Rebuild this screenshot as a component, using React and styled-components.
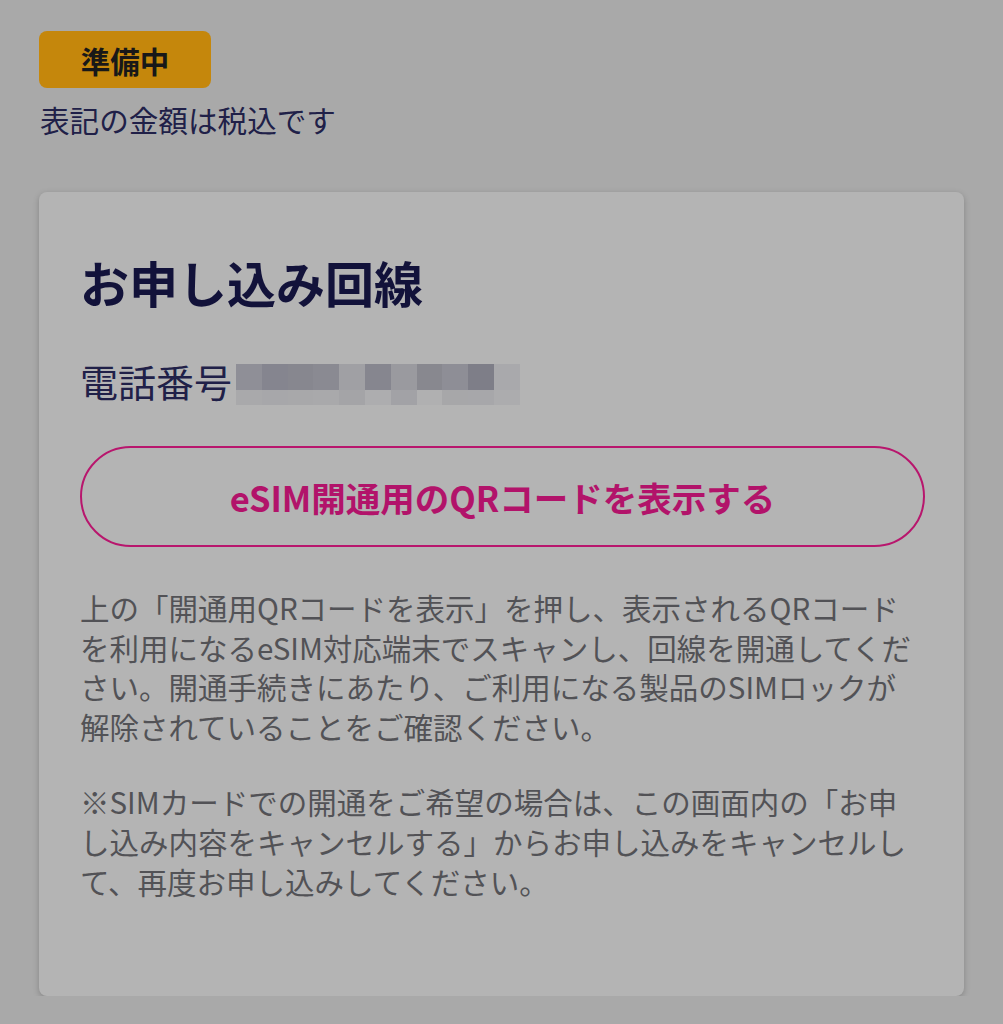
import React from "react";
import styled, { createGlobalStyle } from "styled-components";

const GlobalStyle = createGlobalStyle`
  html, body {
    margin: 0;
    background: #a9a9a9;
  }
  body {
    font-family: "Noto Sans CJK JP", "Noto Sans", sans-serif;
  }
`;

const Page = styled.main`
  padding: 31px 39px 0 39px;
  display: flex;
  flex-direction: column;
  align-items: flex-start;
`;

const Badge = styled.span`
  width: 172px;
  height: 57px;
  border-radius: 8px;
  background: #c5870c;
  color: #181818;
  font-size: 29.5px;
  font-weight: 700;
  display: flex;
  align-items: center;
  justify-content: center;
`;

const TaxNote = styled.p`
  margin: 12px 0 0 1px;
  font-size: 29.6px;
  line-height: 40px;
  color: #202048;
`;

const Card = styled.section`
  align-self: stretch;
  margin-top: 52px;
  background: #b4b4b4;
  border-radius: 8px;
  box-shadow: 0 2px 6px rgba(0, 0, 0, 0.22);
  padding: 56px 39px 95px 41px;
  display: flex;
  flex-direction: column;
`;

const Heading = styled.h2`
  margin: 0;
  font-size: 49px;
  line-height: 68px;
  font-weight: 700;
  color: #12123a;
`;

const PhoneRow = styled.div`
  margin-top: 40px;
  height: 50px;
  display: flex;
  align-items: center;
`;

const PhoneLabel = styled.span`
  font-size: 38px;
  line-height: 50px;
  color: #202048;
`;

const Mosaic = styled.div`
  display: grid;
  grid-template-columns: repeat(11, 25.8px);
  grid-template-rows: 26px 15px;
  margin-left: 4px;
  margin-top: 6px;
  filter: blur(0.6px);
`;

const Cell = styled.div`
  background: ${(p) => p.$c};
`;

const OutlineButton = styled.button`
  margin-top: 40px;
  height: 101px;
  width: 100%;
  box-sizing: border-box;
  border: 2px solid #b8166d;
  border-radius: 51px;
  background: transparent;
  color: #b2136a;
  font-family: "Noto Sans CJK JP", "Noto Sans", sans-serif;
  font-size: 34.5px;
  font-weight: 700;
  cursor: pointer;
`;

const Note = styled.p`
  margin: ${(p) => (p.$first ? "41px" : "36px")} 0 0 0;
  font-size: 29.5px;
  line-height: 39.6px;
  color: #525256;
  line-break: strict;
`;

const topRow = [
  "#8f8f97", "#85858f", "#87878f", "#8a8a92", "#a0a0a4", "#86868f",
  "#9a9a9f", "#88888f", "#8e8e96", "#7e7e88", "#a9a9ac",
];
const bottomRow = [
  "#a9a9ab", "#a7a7aa", "#a8a8aa", "#a9a9ab", "#a4a4a7", "#adadaf",
  "#a2a2a6", "#b0b0b1", "#a7a7a9", "#a7a7aa", "#acacae",
];

const App = () => {
  return (
    <Page>
      <GlobalStyle />
      <Badge>準備中</Badge>
      <TaxNote>表記の金額は税込です</TaxNote>
      <Card>
        <Heading>お申し込み回線</Heading>
        <PhoneRow>
          <PhoneLabel>電話番号</PhoneLabel>
          <Mosaic>
            {[...topRow, ...bottomRow].map((c, i) => (
              <Cell key={i} $c={c} />
            ))}
          </Mosaic>
        </PhoneRow>
        <OutlineButton>eSIM開通用のQRコードを表示する</OutlineButton>
        <Note $first>
          上の「開通用QRコードを表示」を押し、表示されるQRコードを利用になるeSIM対応端末でスキャンし、回線を開通してください。開通手続きにあたり、ご利用になる製品のSIMロックが解除されていることをご確認ください。
        </Note>
        <Note>
          ※SIMカードでの開通をご希望の場合は、この画面内の「お申し込み内容をキャンセルする」からお申し込みをキャンセルして、再度お申し込みしてください。
        </Note>
      </Card>
    </Page>
  );
};

export default App;
